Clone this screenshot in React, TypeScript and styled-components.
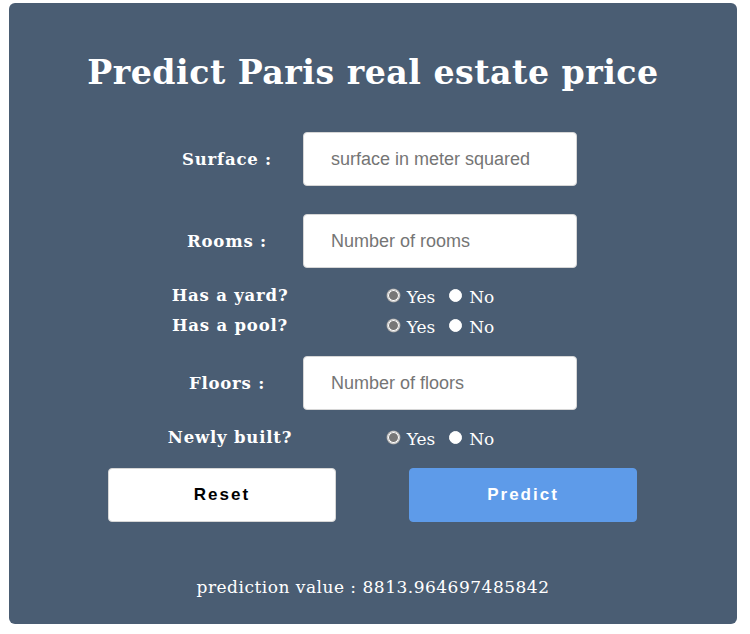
import React from "react";
import styled, { createGlobalStyle } from "styled-components";

const Global = createGlobalStyle`
  html, body { margin: 0; padding: 0; background: #ffffff; }
  body { font-family: "DejaVu Serif", Georgia, serif; }
  * { box-sizing: border-box; }
`;

const Page = styled.div`
  padding: 3px 13px 10px 9px;
`;

const Card = styled.div`
  width: 728px;
  height: 621px;
  background: #4a5d73;
  border-radius: 6px;
  display: flex;
  flex-direction: column;
  align-items: center;
  padding-top: 50px;
`;

const Title = styled.h1`
  margin: 0;
  font-family: "DejaVu Serif", Georgia, serif;
  font-weight: 700;
  font-size: 33.2px;
  line-height: 40px;
  color: #ffffff;
  letter-spacing: 0.5px;
`;

const Form = styled.form`
  display: flex;
  flex-direction: column;
  align-items: center;
  margin-top: 39px;
  width: 100%;
`;

const Row = styled.div<{ $h: number; $mt: number }>`
  display: grid;
  grid-template-columns: 146px 274px;
  align-items: center;
  height: ${(p) => p.$h}px;
  margin-top: ${(p) => p.$mt}px;
  margin-left: -12px;
`;

const Label = styled.label<{ $dy?: number; $dx?: number }>`
  font-family: "DejaVu Serif", Georgia, serif;
  font-weight: 700;
  font-size: 16.5px;
  letter-spacing: 0.8px;
  color: #ffffff;
  text-align: center;
  white-space: nowrap;
  position: relative;
  top: ${(p) => p.$dy ?? 0}px;
  left: ${(p) => p.$dx ?? 0}px;
`;

const Input = styled.input`
  width: 274px;
  height: 54px;
  border: 1px solid #d6d6d6;
  border-radius: 4px;
  background: #ffffff;
  padding: 0 0 0 27px;
  font-family: "Liberation Sans", Arial, sans-serif;
  font-size: 18px;
  color: #333;
  outline: none;
  &::placeholder { color: #757575; }
`;

const RadioGroup = styled.div`
  display: flex;
  justify-content: center;
  align-items: center;
  padding-left: 1px;
`;

const Option = styled.label`
  display: flex;
  align-items: center;
  font-family: "DejaVu Serif", Georgia, serif;
  font-size: 17px;
  color: #ffffff;
  margin-right: 14px;
  &:last-child { margin-right: 0; }
`;

const Radio = styled.input`
  appearance: none;
  width: 13px;
  height: 13px;
  margin: 0 7px 4px 0;
  border-radius: 50%;
  background: #ffffff;
  border: 1px solid #ffffff;
  &:checked {
    background: #777777;
    box-shadow: inset 0 0 0 1px #ffffff, 0 0 0 0.5px #999;
    border: 1px solid #dcdcdc;
  }
`;

const Buttons = styled.div`
  display: flex;
  gap: 73px;
  margin-top: 14px;
  margin-left: -1px;
`;

const Button = styled.button<{ $primary?: boolean }>`
  width: 228px;
  height: 54px;
  border-radius: 4px;
  border: 1px solid ${(p) => (p.$primary ? "#5e9be9" : "#d6d6d6")};
  background: ${(p) => (p.$primary ? "#5e9be9" : "#ffffff")};
  color: ${(p) => (p.$primary ? "#ffffff" : "#000000")};
  font-family: "Liberation Sans", Arial, sans-serif;
  font-weight: 700;
  font-size: 17px;
  letter-spacing: 2px;
  cursor: pointer;
`;

const Result = styled.p`
  margin: 55px 0 0 0;
  font-family: "DejaVu Serif", Georgia, serif;
  font-size: 17px;
  color: #ffffff;
  letter-spacing: 0.5px;
`;

function YesNo({ name }: { name: string }) {
  return (
    <RadioGroup>
      <Option>
        <Radio type="radio" name={name} defaultChecked />
        Yes
      </Option>
      <Option>
        <Radio type="radio" name={name} />
        No
      </Option>
    </RadioGroup>
  );
}

export default function App() {
  return (
    <>
      <Global />
      <Page>
        <Card>
          <Title>Predict Paris real estate price</Title>
          <Form onSubmit={(e) => e.preventDefault()}>
            <Row $h={54} $mt={0}>
              <Label $dx={-3}>Surface :</Label>
              <Input placeholder="surface in meter squared" />
            </Row>
            <Row $h={54} $mt={28}>
              <Label $dx={-3}>Rooms :</Label>
              <Input placeholder="Number of rooms" />
            </Row>
            <Row $h={30} $mt={14}>
              <Label $dy={-2}>Has a yard?</Label>
              <YesNo name="yard" />
            </Row>
            <Row $h={30} $mt={0}>
              <Label $dy={-2}>Has a pool?</Label>
              <YesNo name="pool" />
            </Row>
            <Row $h={54} $mt={14}>
              <Label $dx={-3}>Floors :</Label>
              <Input placeholder="Number of floors" />
            </Row>
            <Row $h={30} $mt={14}>
              <Label $dy={-2}>Newly built?</Label>
              <YesNo name="new" />
            </Row>
            <Buttons>
              <Button type="button">Reset</Button>
              <Button type="submit" $primary>
                Predict
              </Button>
            </Buttons>
          </Form>
          <Result>prediction value : 8813.964697485842</Result>
        </Card>
      </Page>
    </>
  );
}
